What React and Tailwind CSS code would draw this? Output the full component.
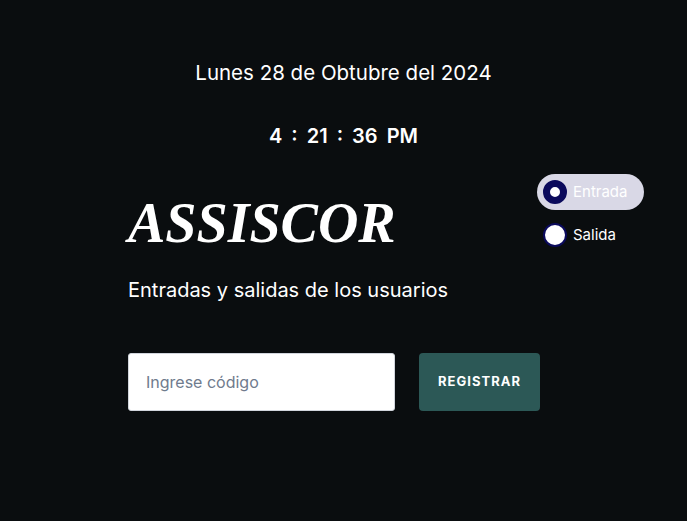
import React, { useState } from "react";

const App = () => {
    const [tipo, setTipo] = useState("entrada");
    const [codigo, setCodigo] = useState("");

    return (
        <div className="min-h-[521px] w-full bg-[#0a0d0f] text-white font-['Inter',sans-serif]">
            <div className="flex flex-col items-center pt-[58px]">
                <p className="text-[20.5px] leading-[30px]">Lunes 28 de Obtubre del 2024</p>
                <p className="mt-[33px] text-[20px] leading-[30px] font-semibold [word-spacing:4px]">4 : 21 : 36 PM</p>
            </div>

            <div className="ml-[128px] mt-[23px] w-[516px]">
                <div className="flex items-start justify-between">
                    <h1 className="mt-[17px] font-['Liberation_Serif',serif] italic font-bold text-[56px] leading-[64px]">
                        ASSISCOR
                    </h1>

                    {/* selector de tipo */}
                    <div className="flex flex-col gap-[7px]">
                        <label
                            onClick={() => setTipo("entrada")}
                            className={`flex h-[36px] w-[107px] items-center gap-[6px] rounded-full pl-[6px] cursor-pointer ${tipo === "entrada" ? "bg-[#d9d8e6]" : ""}`}
                        >
                            <span className={`h-[24px] w-[24px] rounded-full border-[#0b0a5c] ${tipo === "entrada" ? "border-[7px] bg-white" : "border-2 bg-white"}`} />
                            <span className="text-[15px]">Entrada</span>
                        </label>
                        <label
                            onClick={() => setTipo("salida")}
                            className={`flex h-[36px] w-[107px] items-center gap-[6px] rounded-full pl-[6px] cursor-pointer ${tipo === "salida" ? "bg-[#d9d8e6]" : ""}`}
                        >
                            <span className={`h-[24px] w-[24px] rounded-full border-[#0b0a5c] ${tipo === "salida" ? "border-[7px] bg-white" : "border-2 bg-white"}`} />
                            <span className="text-[15px]">Salida</span>
                        </label>
                    </div>
                </div>

                <p className="mt-[20px] text-[20px] leading-[30px]">Entradas y salidas de los usuarios</p>

                <div className="mt-[48px] flex gap-[24px]">
                    <input
                        type="text"
                        value={codigo}
                        onChange={(e) => setCodigo(e.target.value)}
                        placeholder="Ingrese código"
                        className="h-[58px] w-[267px] rounded-[3px] border border-gray-300 bg-white px-[17px] text-[16px] text-gray-800 placeholder:text-[#6f7b8d] outline-none"
                    />
                    <button
                        type="button"
                        className="h-[58px] w-[121px] rounded-[4px] bg-[#2c5856] text-[13px] font-bold tracking-[0.08em] text-white"
                    >
                        REGISTRAR
                    </button>
                </div>
            </div>
        </div>
    );
};

export default App;
